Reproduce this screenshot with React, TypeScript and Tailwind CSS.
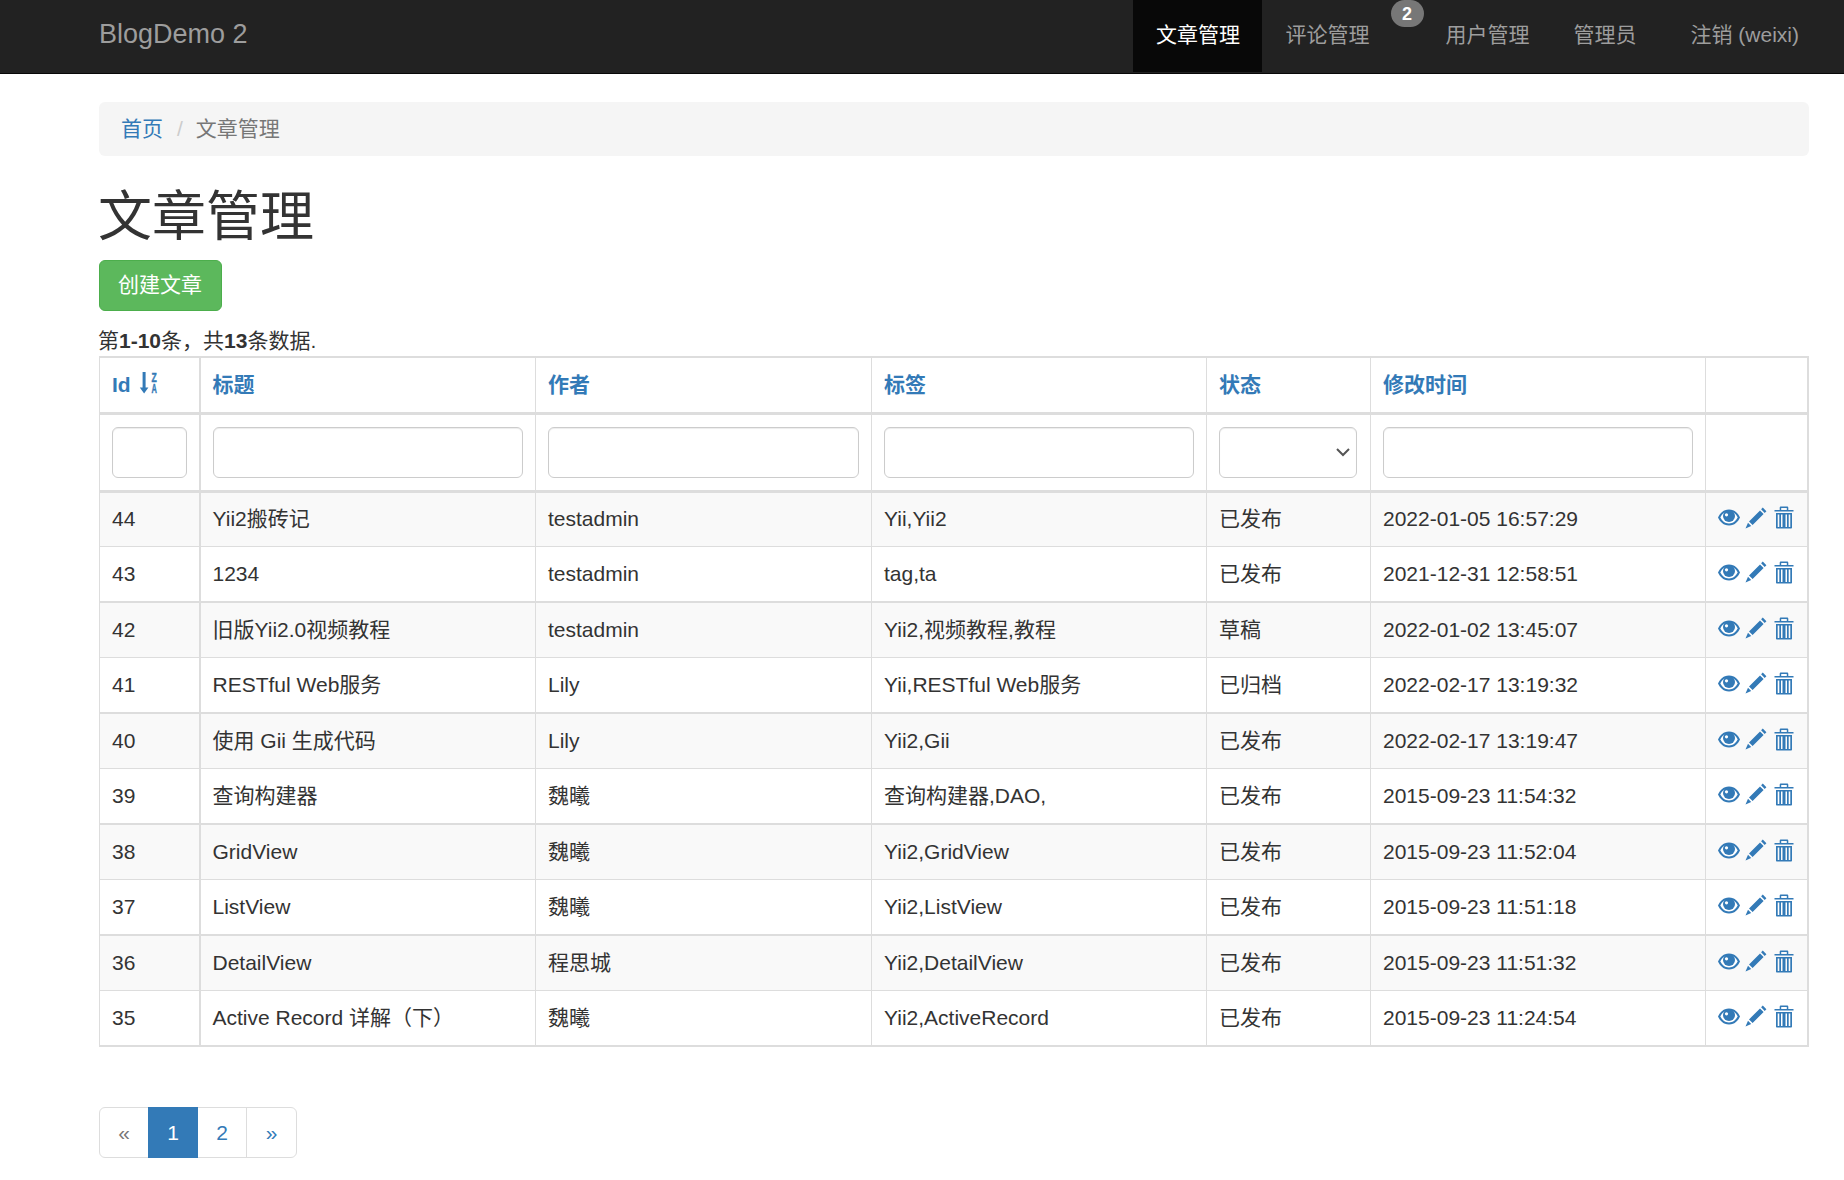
const rows = [
  ["44", "Yii2搬砖记", "testadmin", "Yii,Yii2", "已发布", "2022-01-05 16:57:29"],
  ["43", "1234", "testadmin", "tag,ta", "已发布", "2021-12-31 12:58:51"],
  ["42", "旧版Yii2.0视频教程", "testadmin", "Yii2,视频教程,教程", "草稿", "2022-01-02 13:45:07"],
  ["41", "RESTful Web服务", "Lily", "Yii,RESTful Web服务", "已归档", "2022-02-17 13:19:32"],
  ["40", "使用 Gii 生成代码", "Lily", "Yii2,Gii", "已发布", "2022-02-17 13:19:47"],
  ["39", "查询构建器", "魏曦", "查询构建器,DAO,", "已发布", "2015-09-23 11:54:32"],
  ["38", "GridView", "魏曦", "Yii2,GridView", "已发布", "2015-09-23 11:52:04"],
  ["37", "ListView", "魏曦", "Yii2,ListView", "已发布", "2015-09-23 11:51:18"],
  ["36", "DetailView", "程思城", "Yii2,DetailView", "已发布", "2015-09-23 11:51:32"],
  ["35", "Active Record 详解（下）", "魏曦", "Yii2,ActiveRecord", "已发布", "2015-09-23 11:24:54"],
];

const EyeIcon = () => (
  <svg width="22" height="17" viewBox="0 0 22 17" fill="#337ab7">
    <path d="M11 .5C5 .5 1.500 5 0 8.500 1.500 12 5 16.500 11 16.500S20.500 12 22 8.500C20.500 5 17 .5 11 .5z" />
    <path d="M2.300 8.500C3.300 6.500 4.500 4.800 6 3.800 8 3 14 3 16 3.800c1.500 1 2.700 2.700 3.700 4.700-1.700 3-4.500 6-8.700 6s-7-3-8.700-6z" fill="#fff" />
    <circle cx="11" cy="7" r="6" />
    <circle cx="8.500" cy="5.800" r="1.600" fill="#fff" />
  </svg>
);

const PencilIcon = () => (
  <svg width="22" height="22" viewBox="0 0 22 22" fill="#337ab7">
    <path d="M17.800.6l3.600 3.600-1.700 1.700-3.600-3.600zM15 3.400l3.600 3.600L7.600 18 4 14.400zM3 15.800l3.200 3.200-5.700 2.500z" />
  </svg>
);

const TrashIcon = () => (
  <svg width="20" height="23" viewBox="0 0 20 23" fill="#337ab7">
    <path fillRule="evenodd" d="M7 .5h6c.8 0 1.300.5 1.300 1.300V4H19.500v1.500H.5V4H5.700V1.800C5.700 1 6.200.5 7 .5zM7.200 2v2h5.600V2zM2 7H18v14.500c0 .6-.5 1-1 1H3c-.5 0-1-.4-1-1zM3.700 8.500V21h1.600V8.500zM7 8.500V21h1.500V8.500zM11.500 8.500V21H13V8.500zM14.700 8.500V21h1.600V8.500z" />
  </svg>
);

const SortIcon = () => (
  <svg width="18" height="22" viewBox="0 0 18 22" fill="#337ab7" stroke="#337ab7" strokeWidth="0" className="overflow-visible">
    <path d="M2.600 0h3v15.500h2.800L4.100 21.500-.2 15.500h2.800z" />
    <text transform="translate(11.500 9.500) scale(.72 1)" fontSize="12" fontWeight="700" strokeWidth=".4" fontFamily="Liberation Sans, sans-serif">Z</text>
    <text transform="translate(11.500 21) scale(.62 1)" fontSize="12" fontWeight="700" strokeWidth=".4" fontFamily="Liberation Sans, sans-serif">A</text>
  </svg>
);

const headers = ["标题", "作者", "标签", "状态", "修改时间"];
const cell = "px-3 border-r border-[#ddd]";

const FilterInput = () => (
  <div className="h-[51px] rounded-md border border-[#ccc] bg-white shadow-[inset_0_1px_1px_rgba(0,0,0,0.075)]" />
);

export default function App() {
  return (
    <div className="min-h-[1180px] overflow-hidden bg-white text-[21px] leading-[30px] text-[#333] font-['Liberation_Sans','Noto_Sans_CJK_SC',sans-serif]">
      <nav className="flex h-[74px] items-start justify-between border-b border-[#080808] bg-[#222] pl-[99px] pr-[45px]">
        <a className="text-[27px] leading-[68px] text-[#9d9d9d]">BlogDemo 2</a>
        <ul className="flex text-[#9d9d9d]">
          <li className="mr-px h-[72px] w-[129px] bg-[#080808] pl-[2px] text-center leading-[70px] text-white">文章管理</li>
          <li className="relative h-[72px] w-[183px] pl-[23px] leading-[70px]">
            评论管理
            <span className="absolute left-[128px] top-0 flex h-[27px] w-[33px] items-center justify-center rounded-full bg-[#777] text-[18px] font-bold text-white">2</span>
          </li>
          <li className="h-[72px] w-[128px] leading-[70px]">用户管理</li>
          <li className="h-[72px] w-[117px] leading-[70px]">管理员</li>
          <li className="h-[72px] leading-[70px]">注销 (weixi)</li>
        </ul>
      </nav>
      <main className="pl-[99px] pr-[35px]">
        <div className="mt-[28px] flex h-[54px] items-center rounded-md bg-[#f5f5f5] px-[22px]">
          <a className="text-[#337ab7]">首页</a>
          <span className="pl-[14px] pr-[13px] text-[#ccc]">/</span>
          <span className="text-[#777]">文章管理</span>
        </div>
        <h1 className="mt-[31px] -ml-px text-[54px] font-normal leading-[60px]">文章管理</h1>
        <button className="mt-[13px] block h-[51px] w-[123px] rounded-md border border-[#4cae4c] bg-[#5cb85c] pb-[2px] pr-[1px] text-white">创建文章</button>
        <div className="mt-[15px] -ml-px h-[30px] whitespace-nowrap">
          第<b>1-10</b>条，共<b>13</b>条数据.
        </div>
        <table className="w-full table-fixed border-collapse border-y-2 border-r-2 border-l border-[#ddd]">
          <colgroup>
            <col className="w-[100px]" />
            <col className="w-[336px]" />
            <col className="w-[336px]" />
            <col className="w-[335px]" />
            <col className="w-[164px]" />
            <col className="w-[335px]" />
            <col />
          </colgroup>
          <thead>
            <tr className="h-[56px] border-b-[3px] border-[#ddd] font-bold text-[#337ab7]">
              <th className={`${cell} border-r-2 text-left`}>
                <span className="inline-flex items-center gap-[9px]">
                  Id
                  <span className="-mt-[3px]"><SortIcon /></span>
                </span>
              </th>
              {headers.map((h) => (
                <th key={h} className={`${cell} text-left`}>{h}</th>
              ))}
              <th />
            </tr>
            <tr className="h-[78px] border-b-[3px] border-[#ddd]">
              <td className={`${cell} border-r-2`}><FilterInput /></td>
              <td className={cell}><FilterInput /></td>
              <td className={cell}><FilterInput /></td>
              <td className={cell}><FilterInput /></td>
              <td className={cell}>
                <div className="mr-px flex h-[51px] items-center justify-end rounded-md border border-[#ccc] pr-[6px] shadow-[inset_0_1px_1px_rgba(0,0,0,0.075)]">
                  <svg width="14" height="9" viewBox="0 0 14 9" fill="none" stroke="#555" strokeWidth="2"><path d="M1 1l6 6 6-6" /></svg>
                </div>
              </td>
              <td className={cell}><FilterInput /></td>
              <td />
            </tr>
          </thead>
          <tbody>
            {rows.map((r, i) => (
              <tr key={r[0]} className={i % 2 === 0 ? "h-[55px] border-b border-[#ddd] bg-[#f9f9f9]" : "h-[56px] border-b-2 border-[#ddd]"}>
                {r.map((v, j) => (
                  <td key={j} className={`${cell} ${j === 0 ? "border-r-2" : ""} whitespace-nowrap`}>{v}</td>
                ))}
                <td className="px-3">
                  <div className="-mt-[3px] flex items-center">
                    <EyeIcon />
                    <span className="ml-[5px]"><PencilIcon /></span>
                    <span className="ml-[7px]"><TrashIcon /></span>
                  </div>
                </td>
              </tr>
            ))}
          </tbody>
        </table>
        <div className="mt-[60px] flex h-[51px] w-fit rounded-md border border-[#ddd] text-center">
          <span className="w-[48px] leading-[49px] text-[#777]">«</span>
          <span className="-my-px w-[50px] bg-[#337ab7] leading-[51px] text-white">1</span>
          <span className="w-[49px] border-r border-[#ddd] leading-[49px] text-[#337ab7]">2</span>
          <span className="w-[49px] leading-[49px] text-[#337ab7]">»</span>
        </div>
      </main>
    </div>
  );
}
